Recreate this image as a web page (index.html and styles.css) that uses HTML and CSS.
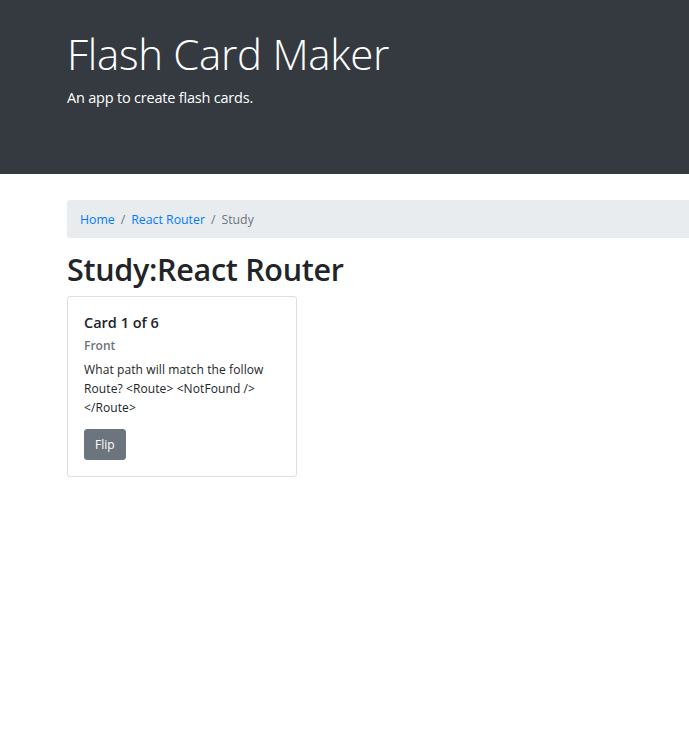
FILE: index.html
```html
<!DOCTYPE html>
<html>
<head>
<meta charset="utf-8">
<link rel="stylesheet" href="styles.css">
</head>
<body>
<header class="jumbotron">
  <div class="container">
    <h1 class="display">Flash Card Maker</h1>
    <p class="lead">An app to create flash cards.</p>
  </div>
</header>
<main class="container">
  <nav class="breadcrumb">
    <a href="#">Home</a><span class="sep">/</span><a href="#">React Router</a><span class="sep">/</span><span class="active">Study</span>
  </nav>
  <h2 class="page-title">Study:React Router</h2>
  <div class="card">
    <div class="card-body">
      <h5 class="card-title">Card 1 of 6</h5>
      <h6 class="card-subtitle">Front</h6>
      <p class="card-text">What path will match the follow Route? &lt;Route&gt; &lt;NotFound /&gt; &lt;/Route&gt;</p>
      <button class="btn">Flip</button>
    </div>
  </div>
</main>
</body>
</html>
```
FILE: styles.css
```css
* { box-sizing: border-box; }
html, body { margin: 0; padding: 0; }
body {
  font-family: "Open Sans", "Noto Sans", sans-serif;
  font-size: 12.8px;
  line-height: 1.5;
  color: #212529;
  background: #fff;
  overflow: hidden;
}
.container {
  padding-left: 67px;
}
.jumbotron {
  background: #343a40;
  color: #fff;
  height: 174px;
  padding-top: 29px;
  margin-bottom: 26px;
}
.display {
  margin: 0 0 8px 0;
  font-size: 42px;
  font-weight: 300;
  line-height: 1.2;
  letter-spacing: -0.3px;
}
.lead {
  margin: 0;
  font-size: 14.5px;
  font-weight: 400;
  line-height: 1.5;
  letter-spacing: -0.2px;
}
.breadcrumb {
  display: flex;
  align-items: center;
  background: #e9ecef;
  border-radius: 3px 0 0 3px;
  height: 38px;
  padding: 2px 13px 0;
  margin-bottom: 15px;
  font-size: 12.3px;
}
.breadcrumb a { color: #007bff; text-decoration: none; }
.breadcrumb .sep { color: #6c757d; padding: 0 6px; }
.breadcrumb .active { color: #6c757d; }
.page-title {
  margin: 0 0 9px 0;
  font-size: 30.5px;
  font-weight: 600;
  line-height: 1.1;
  letter-spacing: -0.3px;
}
.card {
  width: 230px;
  border: 1px solid rgba(0,0,0,.125);
  border-radius: 3px;
}
.card-body { padding: 17px 16px 16px; }
.card-title {
  margin: 0 0 6px 0;
  font-size: 14.5px;
  font-weight: 600;
  line-height: 1.3;
}
.card-subtitle {
  margin: 0 0 6px 0;
  font-size: 12px;
  font-weight: 600;
  color: #6c757d;
  line-height: 1.3;
}
.card-text {
  margin: 0 0 11px 0;
  font-size: 12px;
  line-height: 19.2px;
  letter-spacing: 0.1px;
}
.btn {
  display: block;
  font-family: inherit;
  font-size: 12px;
  font-weight: 400;
  color: #fff;
  background: #6c757d;
  border: 1px solid #6c757d;
  border-radius: 3px;
  height: 31px;
  padding: 0 10px;
}
```
